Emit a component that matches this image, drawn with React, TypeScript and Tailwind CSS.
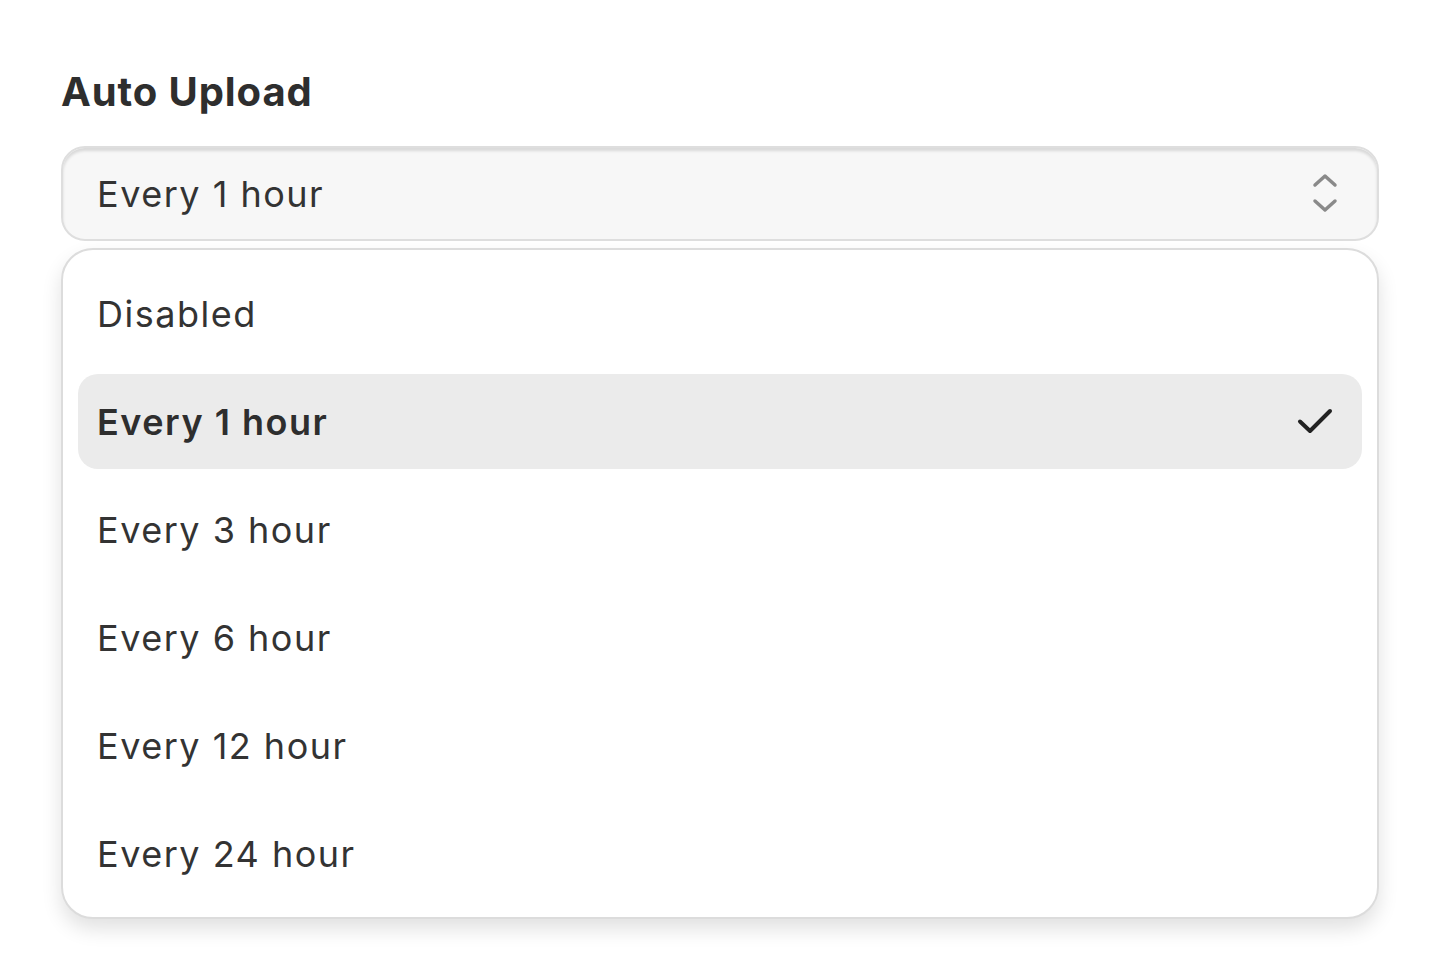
import React from "react";

const options = [
  "Disabled",
  "Every 1 hour",
  "Every 3 hour",
  "Every 6 hour",
  "Every 12 hour",
  "Every 24 hour",
];

function UpDown() {
  return (
    <svg width="28" height="44" viewBox="0 0 28 44" fill="none" stroke="#8a8a8a" strokeWidth="3.5" strokeLinecap="round" strokeLinejoin="round">
      <path d="M4 13 L14 4 L24 13" />
      <path d="M4 29 L14 38 L24 29" />
    </svg>
  );
}

function Check() {
  return (
    <svg width="38" height="38" viewBox="0 0 38 38" fill="none" stroke="#222222" strokeWidth="4" strokeLinecap="round" strokeLinejoin="round">
      <path d="M4 18.5 L14 28 L34 8" />
    </svg>
  );
}

export default function App() {
  const selected = "Every 1 hour";
  return (
    <div
      className="min-h-[979px] w-full bg-white px-[61px] pt-[68px] text-[#333333]"
      style={{ fontFamily: "Inter, 'Noto Sans', sans-serif" }}
    >
      <h1 className="text-[40px] leading-[48px] font-bold tracking-[0.9px] text-[#2e2e2e]">Auto Upload</h1>
      <div className="mt-[30px] flex h-[95px] items-center justify-between rounded-[24px] border-2 border-[#dedede] bg-[#f7f7f7] pl-[34px] pr-[38px] shadow-[inset_0_3px_3px_rgba(0,0,0,0.12)]">
        <span className="text-[36px] leading-[44px] tracking-[1.5px] text-[#333333]">{selected}</span>
        <UpDown />
      </div>
      <div className="mt-[7px] flex flex-col gap-[13px] rounded-[32px] border-2 border-[#dcdcdc] bg-white px-[15px] py-[16px] shadow-[0_10px_20px_rgba(0,0,0,0.12)]">
        {options.map((o) => {
          const isSel = o === selected;
          return (
            <div
              key={o}
              className={
                isSel
                  ? "flex h-[95px] items-center justify-between rounded-[20px] bg-[#ebebeb] pl-[19px] pr-[28px]"
                  : "flex h-[95px] items-center justify-between rounded-[20px] pl-[19px] pr-[28px]"
              }
            >
              <span
                className={
                  isSel
                    ? "text-[36px] leading-[44px] font-semibold tracking-[1.5px] text-[#2e2e2e]"
                    : "text-[36px] leading-[44px] tracking-[1.5px] text-[#333333]"
                }
              >
                {o}
              </span>
              {isSel ? <Check /> : null}
            </div>
          );
        })}
      </div>
    </div>
  );
}
